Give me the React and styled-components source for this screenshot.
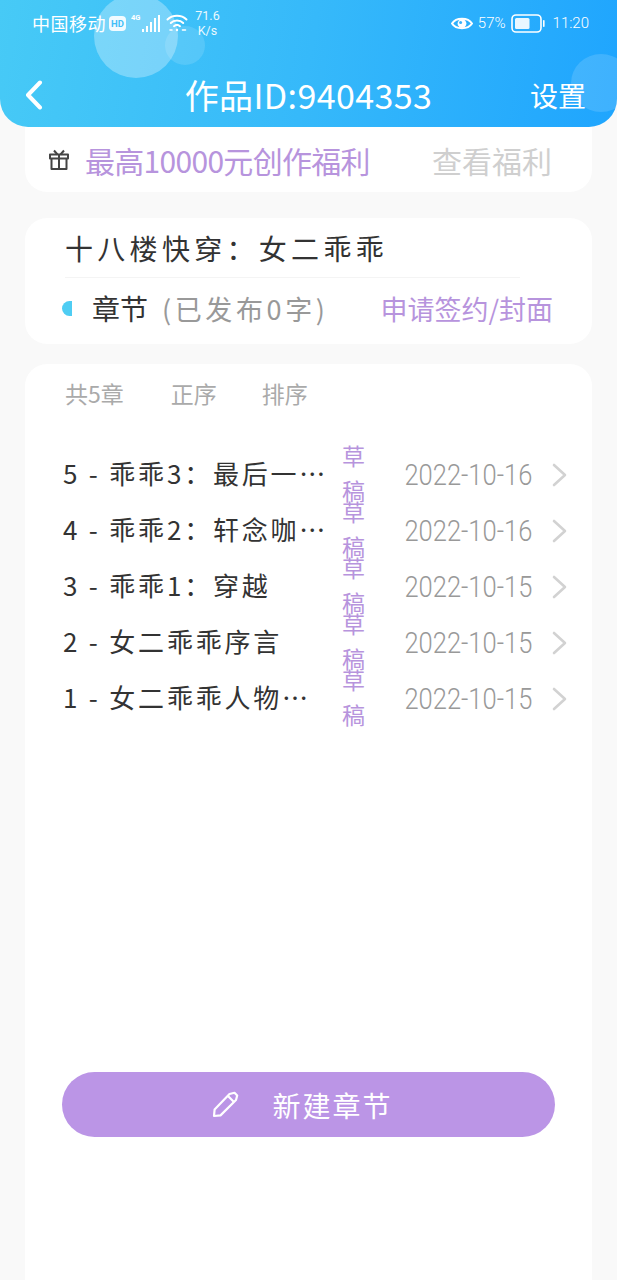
import React from "react";
import styled, { createGlobalStyle } from "styled-components";

const CJK = `"Noto Sans CJK SC", "Noto Sans", sans-serif`;

const Global = createGlobalStyle`
  html, body { margin: 0; padding: 0; background: #f9f9f9; }
  * { box-sizing: border-box; }
  body { font-family: ${CJK}; }
`;

const Page = styled.div`
  width: 617px;
  height: 1280px;
  overflow: hidden;
  display: flex;
  flex-direction: column;
  background: #f9f9f9;
`;

const Header = styled.header`
  position: relative;
  z-index: 2;
  height: 127px;
  flex: none;
  overflow: hidden;
  border-radius: 0 0 28px 28px;
  background: linear-gradient(100deg, #47caf6 0%, #36b9fa 50%, #1fa5fe 100%);
  color: #fff;
`;

const Bubble = styled.span`
  position: absolute;
  left: ${(p) => p.$x}px;
  top: ${(p) => p.$y}px;
  width: ${(p) => p.$w}px;
  height: ${(p) => p.$h}px;
  border-radius: 50%;
  background: ${(p) => p.$bg};
`;

const StatusBar = styled.div`
  position: relative;
  height: 46px;
  padding: 0 28px 0 32px;
  display: flex;
  align-items: center;
  justify-content: space-between;
`;

const StatusGroup = styled.div`
  display: flex;
  align-items: center;
`;

const Carrier = styled.span`
  font-size: 18px;
  letter-spacing: 0.5px;
  line-height: 24px;
`;

const Speed = styled.span`
  margin-left: 6px;
  width: 27px;
  text-align: center;
  font: 12.5px/15px "Roboto", sans-serif;
  opacity: 0.9;
`;

const StatusText = styled.span`
  font: 300 15px/20px "Roboto", sans-serif;
  letter-spacing: ${(p) => p.$ls || 0}px;
  margin-left: ${(p) => p.$ml || 0}px;
`;

const StatusIcon = styled.svg`
  display: block;
  flex: none;
  margin-left: ${(p) => p.$ml || 0}px;
`;

const Nav = styled.nav`
  position: relative;
  height: 81px;
  padding: 16px 31px 0 25px;
  display: grid;
  grid-template-columns: 1fr auto 1fr;
  align-items: center;
`;

const NavTitle = styled.h1`
  margin: 0;
  font-size: 34px;
  font-weight: 400;
  line-height: 44px;
  letter-spacing: 0.4px;
  transform: translateX(3px);
`;

const NavAction = styled.span`
  justify-self: end;
  font-size: 28px;
  line-height: 40px;
`;

const Card = styled.section`
  margin: ${(p) => p.$mt || 0}px 25px 0;
  background: #fff;
  border-radius: 22px;
`;

const PromoCard = styled(Card)`
  height: 65px;
  flex: none;
  border-radius: 0 0 22px 22px;
  padding: 0 40px 0 24px;
  display: flex;
  align-items: center;
  justify-content: space-between;
`;

const PromoLeft = styled.div`
  display: flex;
  align-items: center;
  gap: 16px;
`;

const PromoText = styled.span`
  font-size: 30px;
  line-height: 40px;
  color: ${(p) => p.$color};
  letter-spacing: ${(p) => p.$ls || 0}px;
`;

const InfoCard = styled(Card)`
  height: 126px;
  flex: none;
  padding: 0 39px 0 37px;
`;

const BookTitle = styled.div`
  height: 60px;
  margin: 0 33px 0 3px;
  font-size: 28px;
  line-height: 60px;
  letter-spacing: 4.3px;
  color: #333;
  border-bottom: 1px solid #f4f4f4;
`;

const ChapterRow = styled.div`
  height: 64px;
  padding-bottom: 4px;
  display: flex;
  align-items: center;
`;

const HalfDot = styled.span`
  width: 10px;
  height: 15px;
  border-radius: 8px 0 0 8px;
  background: #4fcdf3;
  flex: none;
`;

const ChapterLabel = styled.span`
  margin-left: 20px;
  font-size: 28px;
  color: #333;
`;

const ChapterCount = styled.span`
  margin-left: 14px;
  font-size: 27px;
  letter-spacing: 3.6px;
  color: #999;
`;

const ApplyLink = styled.span`
  margin-left: auto;
  font-size: 27px;
  color: #b794dd;
`;

const ListCard = styled(Card)`
  flex: 1;
  display: flex;
  flex-direction: column;
  border-radius: 22px 22px 0 0;
  padding: 12px 0 143px;
`;

const ListHeader = styled.div`
  height: 34px;
  margin-left: 40px;
  display: flex;
  align-items: center;
  font-size: 23px;
  color: #aaa;
`;

const HeaderItem = styled.span`
  margin-right: ${(p) => p.$mr}px;
`;

const ChapterList = styled.ul`
  list-style: none;
  margin: 37px 0 0;
  padding: 0;
`;

const Row = styled.li`
  height: 56px;
  padding-left: 38px;
  padding-right: 25px;
  display: flex;
  align-items: center;
`;

const RowTitle = styled.span`
  width: 267px;
  flex: none;
  margin-bottom: 4px;
  white-space: nowrap;
  overflow: hidden;
  text-overflow: ellipsis;
  font-size: 26px;
  line-height: 40px;
  letter-spacing: 2.8px;
  color: #333;
`;

const Draft = styled.span`
  width: 24px;
  flex: none;
  margin: 0 0 4px 12px;
  font-size: 23px;
  line-height: 35px;
  color: #b794dd;
  word-break: break-all;
`;

const RowDate = styled.span`
  margin-left: auto;
  font: 300 29px/40px "Roboto", sans-serif;
  color: #999;
  transform: scaleX(0.88);
  transform-origin: right center;
`;

const Chevron = styled.svg`
  display: block;
  flex: none;
  margin-left: 19px;
`;

const NewButton = styled.button`
  margin: auto 37px 0;
  height: 65px;
  flex: none;
  border: 0;
  border-radius: 33px;
  background: #bb95e6;
  color: #fff;
  display: flex;
  align-items: center;
  justify-content: center;
  gap: 33px;
  font-family: ${CJK};
  font-size: 28px;
  letter-spacing: 2px;
  padding: 0 12px 0 0;
`;

const chapters = [
  { title: "5 - 乖乖3：最后一次的咖啡", date: "2022-10-16" },
  { title: "4 - 乖乖2：轩念咖啡馆的故事", date: "2022-10-16" },
  { title: "3 - 乖乖1：穿越", date: "2022-10-15" },
  { title: "2 - 女二乖乖序言", date: "2022-10-15" },
  { title: "1 - 女二乖乖人物介绍", date: "2022-10-15" },
];

export default function App() {
  return (
    <Page>
      <Global />
      <Header>
        <Bubble $x={94} $y={-6} $w={84} $h={84} $bg="rgba(255,255,255,0.3)" />
        <Bubble $x={165} $y={26} $w={40} $h={39} $bg="rgba(255,255,255,0.13)" />
        <Bubble $x={571} $y={54} $w={60} $h={58} $bg="rgba(255,255,255,0.14)" />
        <StatusBar>
          <StatusGroup>
            <Carrier>中国移动</Carrier>
            <StatusIcon $ml={3} width="17" height="15" viewBox="0 0 17 15">
              <rect width="17" height="15" rx="4" fill="#fff" opacity=".9" />
              <text x="8.5" y="11" textAnchor="middle" fontSize="9.5" fontWeight="700" fontFamily="Roboto, sans-serif" fill="#42bff8">HD</text>
            </StatusIcon>
            <StatusIcon $ml={5} width="35" height="20" viewBox="0 0 35 20">
              <text x="0" y="7" fontSize="7.5" fontWeight="700" fontFamily="Roboto, sans-serif" fill="#fff">4G</text>
              <g fill="#fff">
                <rect x="11" y="16" width="2" height="3" />
                <rect x="15" y="13" width="2" height="6" />
                <rect x="19" y="9" width="2" height="10" />
                <rect x="23" y="5" width="2" height="14" />
                <rect x="27" y="2" width="2" height="17" />
              </g>
            </StatusIcon>
            <StatusIcon $ml={0} width="22" height="20" viewBox="0 0 22 20" fill="none" stroke="#fff" strokeWidth="2" strokeLinecap="round">
              <path d="M1.5 6.5C6.5 1.5 15.5 1.5 20.5 6.5" />
              <path d="M4.8 10C8 6.8 14 6.8 17.2 10" />
              <path d="M8 13.2C9.8 11.6 12.2 11.6 14 13.2" />
              <circle cx="11" cy="17" r="1.2" fill="#fff" stroke="none" />
              <path d="M16.5 17h3M4 17h2" strokeWidth="1.6" />
            </StatusIcon>
            <Speed>71.6<br />K/s</Speed>
          </StatusGroup>
          <StatusGroup>
            <StatusIcon width="22" height="15" viewBox="0 0 22 15">
              <path d="M1 7.5C5 1.2 17 1.2 21 7.5C17 13.8 5 13.8 1 7.5Z" fill="none" stroke="#fff" strokeWidth="2" />
              <circle cx="11" cy="7.5" r="4.4" fill="#fff" />
              <circle cx="9.6" cy="6.4" r="1.5" fill="#3ab2fb" />
            </StatusIcon>
            <StatusText $ml={5}>57%</StatusText>
            <StatusIcon $ml={5} width="34" height="19" viewBox="0 0 34 19">
              <rect x="1" y="1" width="29" height="17" rx="4" fill="none" stroke="#fff" strokeWidth="1.6" />
              <rect x="4" y="4" width="14.5" height="11" rx="1.5" fill="#fff" opacity=".9" />
              <rect x="32" y="6" width="1.6" height="7" rx=".8" fill="#fff" />
            </StatusIcon>
            <StatusText $ml={8}>11:20</StatusText>
          </StatusGroup>
        </StatusBar>
        <Nav>
          <svg width="18" height="30" viewBox="0 0 18 30" fill="none" stroke="#fff" strokeWidth="4" strokeLinecap="round" strokeLinejoin="round">
            <path d="M15 2.5L3 15L15 27.5" />
          </svg>
          <NavTitle>作品ID:9404353</NavTitle>
          <NavAction>设置</NavAction>
        </Nav>
      </Header>

      <PromoCard>
        <PromoLeft>
          <svg width="20" height="22" viewBox="0 0 20 22" fill="none" stroke="#444" strokeWidth="2" strokeLinejoin="round">
            <path d="M2.5 9.5V20H17.5V9.5" />
            <path d="M1 5.5H19V9.5H1Z" />
            <path d="M10 5.5V20" />
            <path d="M5 1.5L8.5 5.5M15 1.5L11.5 5.5" />
          </svg>
          <PromoText $color="#b794dd" $ls={-0.7}>最高10000元创作福利</PromoText>
        </PromoLeft>
        <PromoText $color="#cfcfcf">查看福利</PromoText>
      </PromoCard>

      <InfoCard $mt={26}>
        <BookTitle>十八楼快穿：女二乖乖</BookTitle>
        <ChapterRow>
          <HalfDot />
          <ChapterLabel>章节</ChapterLabel>
          <ChapterCount>(已发布0字)</ChapterCount>
          <ApplyLink>申请签约/封面</ApplyLink>
        </ChapterRow>
      </InfoCard>

      <ListCard $mt={20}>
        <ListHeader>
          <HeaderItem $mr={47}>共5章</HeaderItem>
          <HeaderItem $mr={45}>正序</HeaderItem>
          <HeaderItem $mr={0}>排序</HeaderItem>
        </ListHeader>
        <ChapterList>
          {chapters.map((c) => (
            <Row key={c.title}>
              <RowTitle>{c.title}</RowTitle>
              <Draft>草稿</Draft>
              <RowDate>{c.date}</RowDate>
              <Chevron width="16" height="24" viewBox="0 0 16 24" fill="none" stroke="#d2d2d2" strokeWidth="2.6" strokeLinecap="round" strokeLinejoin="round">
                <path d="M3 2L14 12L3 22" />
              </Chevron>
            </Row>
          ))}
        </ChapterList>
        <NewButton>
          <svg width="27" height="27" viewBox="0 0 27 27" fill="none" stroke="#fff" strokeWidth="2.2" strokeLinejoin="round">
            <path d="M2 25L2.6 18.5L17.5 3L22.5 1.8L25.2 4.5L24 9L8.5 24.4Z" />
            <path d="M16 5L22 11" />
          </svg>
          新建章节
        </NewButton>
      </ListCard>
    </Page>
  );
}
